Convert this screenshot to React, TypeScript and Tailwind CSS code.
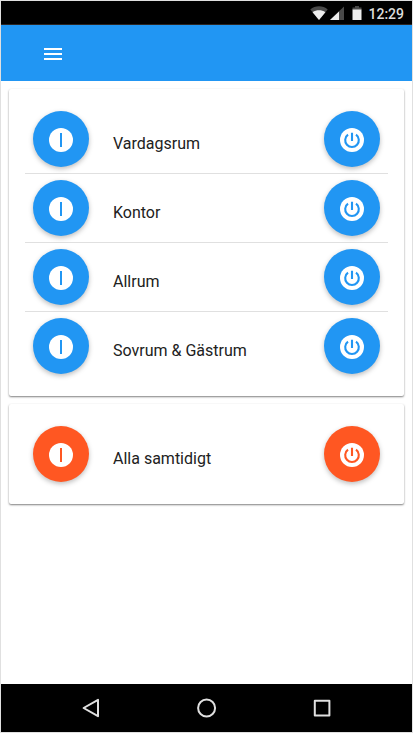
import React, { useState } from "react";

type Tone = "blue" | "orange";

const toneBackground: Record<Tone, string> = {
  blue: "bg-[#2196f3]",
  orange: "bg-[#ff5722]",
};

const toneStroke: Record<Tone, string> = {
  blue: "stroke-[#2196f3]",
  orange: "stroke-[#ff5722]",
};

function StatusBar() {
  return (
    <div className="flex h-6 items-center justify-end border-b border-[#2b2522] bg-black pr-2 pt-px">
      <svg className="mr-0.5 h-4 w-[18px]" viewBox="0 0 18 16" aria-hidden="true">
        <path d="M0.3 4.4C5 .1 13 .1 17.7 4.4L9 15z" fill="#4a4a4a" />
        <path d="M2.6 7.2C6.4 4.6 11.6 4.6 15.4 7.2L9 15z" fill="#eeeeee" />
      </svg>
      <svg className="mr-2 h-4 w-[14px]" viewBox="0 0 14 16" aria-hidden="true">
        <path d="M14 1.5V15H0z" fill="#4a4a4a" />
        <path d="M9 6.4V15H0z" fill="#eeeeee" />
      </svg>
      <svg className="mr-1.5 h-4 w-[10px]" viewBox="0 0 10 16" aria-hidden="true">
        <path d="M3 1h4v1.5h2.5V5H.5V2.5H3z" fill="#4a4a4a" />
        <path d="M.5 4.5h9V15h-9z" fill="#eeeeee" />
      </svg>
      <span className="pt-0.5 text-sm font-medium text-[#dddddd]">12:29</span>
    </div>
  );
}

function AppBar() {
  return (
    <header className="flex h-14 items-center bg-[#2196f3] px-10 pt-0.5">
      <button type="button" aria-label="Meny" className="text-white">
        <svg className="size-6" viewBox="0 0 24 24" fill="currentColor">
          <path d="M3 18h18v-2H3v2zm0-5h18v-2H3v2zm0-7v2h18V6H3z" />
        </svg>
      </button>
    </header>
  );
}

function RoundButton({ tone, kind, label }: { tone: Tone; kind: "on" | "off"; label: string }) {
  return (
    <button
      type="button"
      aria-label={label}
      className={`flex size-14 shrink-0 items-center justify-center rounded-full pt-0.5 shadow-[0_2px_5px_0_rgba(0,0,0,0.26)] ${toneBackground[tone]}`}
    >
      <svg className={`size-6 ${toneStroke[tone]}`} viewBox="0 0 24 24" fill="none" strokeWidth="2">
        <circle cx="12" cy="12" r="12" fill="#ffffff" stroke="none" />
        {kind === "on" ? (
          <path d="M12 5v14" />
        ) : (
          <path d="M12 4.8v8.2M8 6.7a6.8 6.8 0 1 0 8 0" strokeWidth="2.1" />
        )}
      </svg>
    </button>
  );
}

function SwitchRow({ name, tone }: { name: string; tone: Tone }) {
  return (
    <li className="flex items-center border-b border-[#e0e0e0] px-2 py-1.5 last:border-b-0">
      <RoundButton tone={tone} kind="on" label={`${name} på`} />
      <span className="flex-1 px-6 pt-2.5 text-base text-[#212121]">{name}</span>
      <RoundButton tone={tone} kind="off" label={`${name} av`} />
    </li>
  );
}

function Card({ names, tone }: { names: string[]; tone: Tone }) {
  return (
    <ul className="rounded-xs bg-white p-4 shadow-[0_1px_2px_0_rgba(0,0,0,0.5)]">
      {names.map((name) => (
        <SwitchRow key={name} name={name} tone={tone} />
      ))}
    </ul>
  );
}

function NavigationBar() {
  return (
    <nav className="flex h-12 items-center justify-center bg-black text-[#e0e0e0]">
      <button type="button" aria-label="Tillbaka" className="flex w-[115px] justify-center">
        <svg className="size-6" viewBox="0 0 24 24" fill="none" stroke="currentColor" strokeWidth="2" strokeLinejoin="round">
          <path d="M18 3.8v16.4L3.6 12z" />
        </svg>
      </button>
      <button type="button" aria-label="Hem" className="flex w-[115px] justify-center">
        <svg className="size-6" viewBox="0 0 24 24" fill="none" stroke="currentColor" strokeWidth="2">
          <circle cx="11.6" cy="12" r="8.5" />
        </svg>
      </button>
      <button type="button" aria-label="Översikt" className="flex w-[115px] justify-center">
        <svg className="size-6" viewBox="0 0 24 24" fill="none" stroke="currentColor" strokeWidth="2" strokeLinejoin="round">
          <path d="M4.8 4.8h14.6v14.6H4.8z" />
        </svg>
      </button>
    </nav>
  );
}

export default function App() {
  const [rooms] = useState(["Vardagsrum", "Kontor", "Allrum", "Sovrum & Gästrum"]);

  return (
    <div className="min-h-screen bg-white pr-px font-[Roboto,sans-serif]">
      <div className="flex min-h-screen flex-col border border-[#e0e0e0]">
        <StatusBar />
        <AppBar />
        <main className="flex flex-1 flex-col gap-2 p-2">
          <Card names={rooms} tone="blue" />
          <Card names={["Alla samtidigt"]} tone="orange" />
        </main>
        <NavigationBar />
      </div>
    </div>
  );
}
